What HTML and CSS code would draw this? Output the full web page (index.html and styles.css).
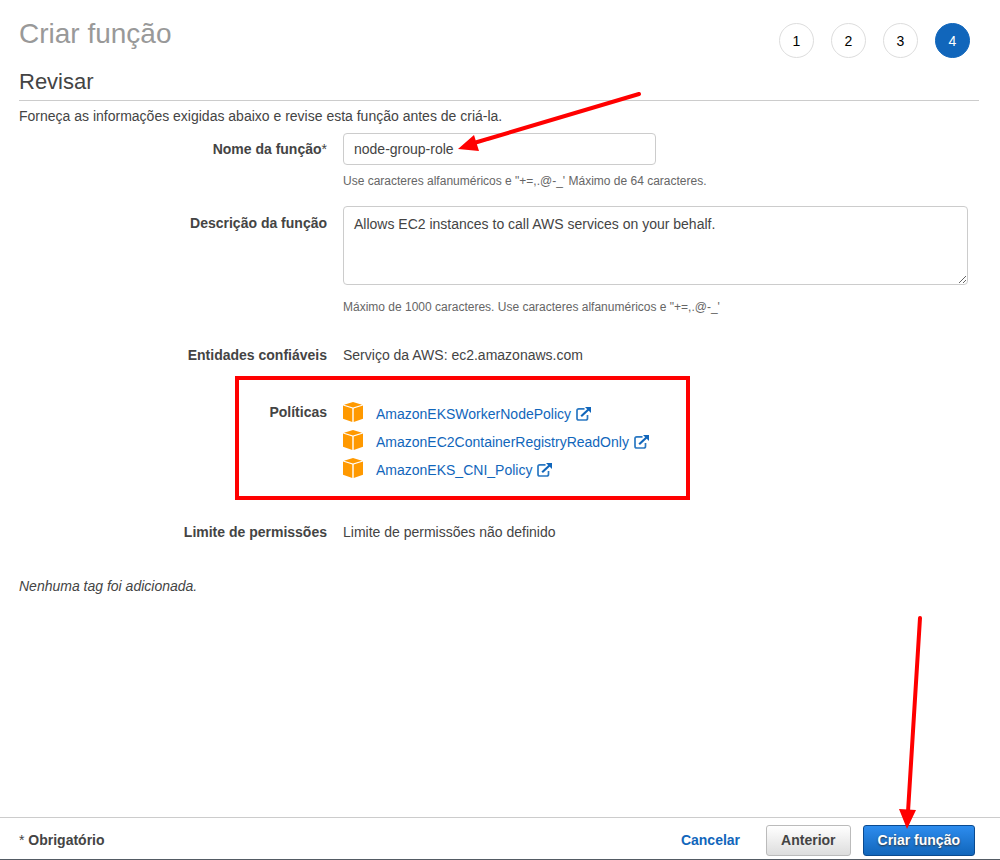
FILE: index.html
```html
<!DOCTYPE html>
<html lang="pt-BR">
<head>
<meta charset="utf-8">
<title>Criar função</title>
<link rel="stylesheet" href="styles.css">
</head>
<body>
<svg class="sprites" aria-hidden="true">
  <symbol id="cube" viewBox="0 0 20 20">
    <path fill="#ff9900" d="M10 0 19 2.800 10 5.500 1 2.800ZM0 3.600 9.300 6.500V20L0 16.800ZM20 3.600 10.700 6.500V20L20 16.800Z"/>
  </symbol>
  <symbol id="external" viewBox="0 0 16 14">
    <path fill="none" stroke="#2a78c2" stroke-width="1.700" d="M8.500 1.800H2.800Q1 1.800 1 3.600V11.200Q1 13 2.800 13H9.700Q11.500 13 11.500 11.200V8"/>
    <path fill="none" stroke="#1166bb" stroke-width="2.200" d="M5.200 9.300 13 2"/>
    <path fill="#1166bb" d="M9 0H15V6Z"/>
  </symbol>
</svg>
<form class="page">
  <header class="header">
    <h1 class="title">Criar função</h1>
    <ol class="steps">
      <li class="step">1</li>
      <li class="step">2</li>
      <li class="step">3</li>
      <li class="step step-active" aria-current="step">4</li>
    </ol>
  </header>
  <main class="content">
    <h2 class="subtitle">Revisar</h2>
    <p class="intro">Forneça as informações exigidas abaixo e revise esta função antes de criá-la.</p>
    <div class="row row-name">
      <label class="label" for="role-name">Nome da função<span class="star">*</span></label>
      <div class="field">
        <input class="input" id="role-name" type="text" value="node-group-role">
        <p class="help">Use caracteres alfanuméricos e "+=,.@-_' Máximo de 64 caracteres.</p>
      </div>
    </div>
    <div class="row row-description">
      <label class="label" for="role-description">Descrição da função</label>
      <div class="field">
        <textarea class="input textarea" id="role-description">Allows EC2 instances to call AWS services on your behalf.</textarea>
        <p class="help">Máximo de 1000 caracteres. Use caracteres alfanuméricos e "+=,.@-_'</p>
      </div>
    </div>
    <div class="row row-trusted">
      <span class="label">Entidades confiáveis</span>
      <span class="field">Serviço da AWS: ec2.amazonaws.com</span>
    </div>
    <div class="row row-policies">
      <span class="label">Políticas</span>
      <ul class="policies">
        <li class="policy"><svg class="cube"><use href="#cube"/></svg><a class="link" href="#">AmazonEKSWorkerNodePolicy<svg class="external"><use href="#external"/></svg></a></li>
        <li class="policy"><svg class="cube"><use href="#cube"/></svg><a class="link" href="#">AmazonEC2ContainerRegistryReadOnly<svg class="external"><use href="#external"/></svg></a></li>
        <li class="policy"><svg class="cube"><use href="#cube"/></svg><a class="link" href="#">AmazonEKS_CNI_Policy<svg class="external"><use href="#external"/></svg></a></li>
      </ul>
    </div>
    <div class="row row-limit">
      <span class="label">Limite de permissões</span>
      <span class="field">Limite de permissões não definido</span>
    </div>
    <p class="tags">Nenhuma tag foi adicionada.</p>
  </main>
  <footer class="footer">
    <span class="required"><span class="star">*</span> Obrigatório</span>
    <a class="cancel" href="#">Cancelar</a>
    <button class="button" type="button">Anterior</button>
    <button class="button button-primary" type="button">Criar função</button>
  </footer>
</form>
<svg class="annotations" width="1000" height="860" viewBox="0 0 1000 860" aria-hidden="true">
  <g fill="none" stroke="#ff0000" stroke-width="4">
    <rect x="237" y="378" width="451" height="120"/>
    <path stroke-linecap="round" d="M639 94 474 143M920 618 908 812"/>
  </g>
  <path fill="#ff0000" d="M458 149 474 135 479 151ZM907 829 899 809 916 810Z"/>
</svg>
</body>
</html>
```
FILE: styles.css
```css
* {
  box-sizing: border-box;
}

body {
  margin: 0;
  position: relative;
  background: #fff;
  color: #444;
  font: 14px/20px "Liberation Sans", Arial, sans-serif;
}

h1, h2, p, ol, ul {
  margin: 0;
  padding: 0;
  font-weight: normal;
  list-style: none;
}

a {
  color: #1166bb;
  text-decoration: none;
}

.sprites {
  display: none;
}

.page {
  display: flex;
  flex-direction: column;
  min-height: 100vh;
  border-bottom: 1px solid #545b64;
}

.header {
  display: flex;
  justify-content: space-between;
  padding: 16px 30px 0 19px;
}

.title {
  color: #999;
  font-size: 28px;
  line-height: 36px;
}

.steps {
  display: flex;
  gap: 17px;
  padding-top: 7px;
}

.step {
  width: 35px;
  height: 35px;
  border: 1px solid #ddd;
  border-radius: 50%;
  color: #000;
  line-height: 34px;
  text-align: center;
}

.step-active {
  border-color: #1166bb;
  background: #1166bb;
  color: #fff;
}

.content {
  flex: 1;
  padding: 0 21px 0 19px;
}

.subtitle {
  margin-top: 8px;
  padding-bottom: 2px;
  border-bottom: 1px solid #ccc;
  font-size: 22px;
  line-height: 32px;
}

.intro {
  margin-top: 5px;
}

.row {
  display: grid;
  grid-template-columns: 308px minmax(0, 1fr);
  column-gap: 16px;
}

.row-name {
  margin-top: 7px;
}

.row-description {
  margin-top: 16px;
}

.row-trusted {
  margin-top: 29px;
}

.row-policies {
  margin-top: 35px;
}

.row-limit {
  margin-top: 38px;
}

.label {
  font-weight: bold;
  text-align: right;
}

.row-name .label {
  padding-top: 6px;
}

.row-description .label {
  padding-top: 7px;
}

.row-policies .label {
  padding-top: 2px;
}

.star {
  font-weight: normal;
}

.input {
  display: block;
  width: calc(50% - 5px);
  height: 32px;
  padding: 0 10px;
  border: 1px solid #ccc;
  border-radius: 4px;
  background: #fff;
  color: #444;
  font: inherit;
}

.textarea {
  width: calc(100% - 11px);
  height: 79px;
  padding: 7px 10px;
}

.help {
  margin-top: 7px;
  color: #666;
  font-size: 12px;
  line-height: 18px;
}

.row-description .help {
  margin-top: 13px;
}

.policy {
  display: flex;
  gap: 13px;
  line-height: 28px;
}

.cube {
  width: 20px;
  height: 20px;
  margin-top: 2px;
}

.link {
  display: flex;
  align-items: center;
  gap: 5px;
}

.external {
  width: 16px;
  height: 14px;
}

.tags {
  margin-top: 34px;
  font-style: italic;
}

.footer {
  display: flex;
  align-items: center;
  padding: 7px 25px 3px 19px;
  border-top: 1px solid #ccc;
  font-weight: bold;
}

.required,
.cancel {
  padding-bottom: 2px;
}

.required {
  margin-right: auto;
}

.cancel {
  margin-right: 26px;
}

.button {
  height: 31px;
  padding: 0 14px 2px;
  border: 1px solid #bbb;
  border-radius: 3px;
  background: linear-gradient(#fff, #ddd);
  color: #444;
  font: inherit;
}

.button-primary {
  margin-left: 12px;
  border-color: #0a4a8f;
  background: linear-gradient(#2d8cee, #1166bb);
  color: #fff;
  text-shadow: 0 1px 2px #333;
}

.annotations {
  position: absolute;
  top: 0;
  left: 0;
  pointer-events: none;
}
```
